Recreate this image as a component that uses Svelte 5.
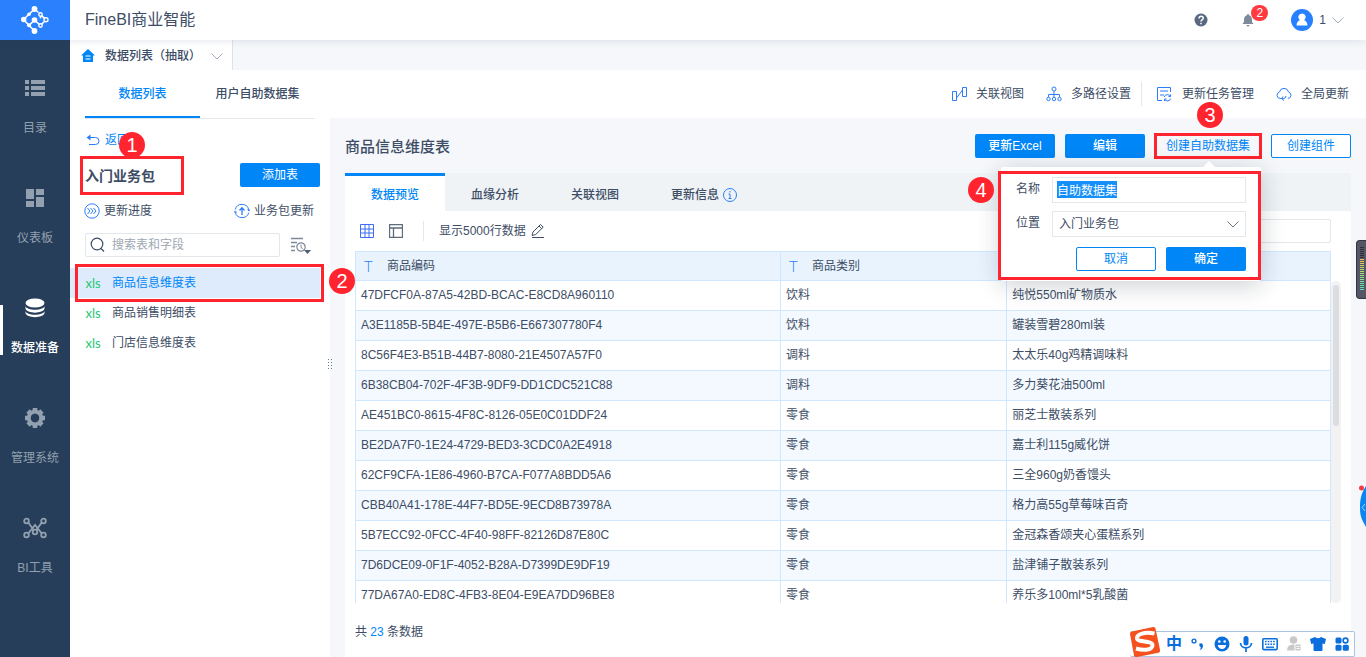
<script lang="ts">
  import { onMount } from "svelte";

  interface DataRow {
    code: string;
    category: string;
    name: string;
  }

  const navItems = [
    { icon: "list", label: "目录" },
    { icon: "board", label: "仪表板" },
    { icon: "data", label: "数据准备" },
    { icon: "gear", label: "管理系统" },
    { icon: "tools", label: "BI工具" },
  ];

  const tables = ["商品信息维度表", "商品销售明细表", "门店信息维度表"];

  const detailTabs = ["数据预览", "血缘分析", "关联视图", "更新信息"];

  const rows: DataRow[] = [
    { code: "47DFCF0A-87A5-42BD-BCAC-E8CD8A960110", category: "饮料", name: "纯悦550ml矿物质水" },
    { code: "A3E1185B-5B4E-497E-B5B6-E667307780F4", category: "饮料", name: "罐装雪碧280ml装" },
    { code: "8C56F4E3-B51B-44B7-8080-21E4507A57F0", category: "调料", name: "太太乐40g鸡精调味料" },
    { code: "6B38CB04-702F-4F3B-9DF9-DD1CDC521C88", category: "调料", name: "多力葵花油500ml" },
    { code: "AE451BC0-8615-4F8C-8126-05E0C01DDF24", category: "零食", name: "丽芝士散装系列" },
    { code: "BE2DA7F0-1E24-4729-BED3-3CDC0A2E4918", category: "零食", name: "嘉士利115g威化饼" },
    { code: "62CF9CFA-1E86-4960-B7CA-F077A8BDD5A6", category: "零食", name: "三全960g奶香馒头" },
    { code: "CBB40A41-178E-44F7-BD5E-9ECD8B73978A", category: "零食", name: "格力高55g草莓味百奇" },
    { code: "5B7ECC92-0FCC-4F40-98FF-82126D87E80C", category: "零食", name: "金冠森香颂夹心蛋糕系列" },
    { code: "7D6DCE09-0F1F-4052-B28A-D7399DE9DF19", category: "零食", name: "盐津铺子散装系列" },
    { code: "77DA67A0-ED8C-4FB3-8E04-E9EA7DD96BE8", category: "零食", name: "养乐多100ml*5乳酸菌" },
  ];

  let activeNav = $state("data");
  let activeTable = $state(tables[0]);
  let activeTab = $state(detailTabs[0]);
  let keyword = $state("");
  let previewKeyword = $state("");
  let datasetName = $state("自助数据集");
  let location = $state("入门业务包");
  let nameInput: HTMLInputElement;

  onMount(() => {
    nameInput.focus();
    nameInput.select();
  });
</script>

{#snippet chevron()}
  <svg class="chevron" width="12" height="7" viewBox="0 0 12 7" aria-hidden="true">
    <path d="M.5.5 6 6 11.5.5" fill="none" stroke="currentColor" />
  </svg>
{/snippet}

{#snippet navIcon(name: string)}
  <svg width="24" height="22" viewBox="0 0 24 22" fill="currentColor" aria-hidden="true">
    {#if name === "list"}
      <path d="M2 3h4v4H2zM8 3h14v4H8zM2 9h4v4H2zM8 9h14v4H8zM2 15h4v4H2zM8 15h14v4H8z" />
    {:else if name === "board"}
      <path d="M3 2h8v10H3zM13 2h8v6h-8zM3 14h8v6H3zM13 10h8v10h-8z" />
    {:else if name === "data"}
      <ellipse cx="12" cy="6" rx="9.5" ry="4.6" />
      <path d="M2.500 9c1 5 18 5 19 0v2.500c-1 5.500-18 5.500-19 0zM2.500 14c1 5 18 5 19 0v2c-1 5.500-18 5.500-19 0z" />
    {:else if name === "gear"}
      <circle cx="12" cy="11" r="6.200" fill="none" stroke="currentColor" stroke-width="4" />
      <path
        d="M12 1v4M12 17v4M2 11h4M18 11h4M5 4l3 3M16 15l3 3M19 4l-3 3M8 15l-3 3"
        stroke="currentColor"
        stroke-width="4.600"
      />
      <circle cx="12" cy="11" r="4.200" fill="#263e5a" />
    {:else}
      <g fill="none" stroke="currentColor" stroke-width="1.800">
        <circle cx="3.500" cy="4" r="2.300" />
        <circle cx="20.500" cy="4" r="2.300" />
        <circle cx="3.500" cy="18" r="2.300" />
        <circle cx="20.500" cy="18" r="2.300" />
        <circle cx="12" cy="15" r="2.300" />
        <path d="m5.200 5.500 5.300 7.300M18.800 5.500l-5.300 7.300M5.200 16.500 12 8l6.800 8.500" />
      </g>
    {/if}
  </svg>
{/snippet}

{#snippet actionIcon(name: string)}
  <svg width="16" height="16" viewBox="0 0 16 16" fill="none" stroke="#2c7dfa" aria-hidden="true">
    {#if name === "relation"}
      <path d="M1.500 5.500h4v9h-4zM11.500 1.500h4v9h-4zM5.500 12l6-8" />
    {:else if name === "path"}
      <circle cx="8" cy="3" r="2" />
      <circle cx="2.500" cy="13" r="1.700" />
      <circle cx="8" cy="13" r="1.700" />
      <circle cx="13.500" cy="13" r="1.700" />
      <path d="M8 5v6M2.500 11V8.500h11V11" />
    {:else if name === "task"}
      <path d="M14.500 6V1.500h-13v13H6M4 5h8M4 9h4" />
      <path d="M8.200 11a3.500 3.500 0 0 1 6.300-.7M14.800 12.500a3.500 3.500 0 0 1-6.300.8M14.500 8.500v2h-2M8.500 15v-2h2" />
    {:else}
      <path d="M5.500 12.500H4.200a3.300 3.300 0 0 1-.7-6.500 4.600 4.600 0 0 1 9 0 3.300 3.300 0 0 1-.7 6.500M7 10.500l-1.500 2L8 14.500M5.500 12.500h2.200q2 0 2.300-2.500" />
    {/if}
  </svg>
{/snippet}

{#snippet step(number: number)}
  <span class="step step--{number}">{number}</span>
{/snippet}

<div class="app">
  <header class="topbar">
    <a class="topbar__logo" href="#home" aria-label="首页">
      <svg width="30" height="30" viewBox="0 0 30 30" fill="none" stroke="#fff" stroke-width="1.600" aria-hidden="true">
        <path d="M14.500 4 3.500 14.500l11 11.500M14.500 15 9 20.500M14.500 15l6 5.500 5.500-5.700-5.500-5.300v4M14.500 4l4 3.500" />
        <g fill="#fff" stroke="none">
          <circle cx="14.500" cy="4" r="2.900" />
          <circle cx="9" cy="9.300" r="1.800" />
          <circle cx="3.700" cy="14.500" r="2.700" />
          <circle cx="14.500" cy="15" r="2.800" />
          <circle cx="9" cy="20.300" r="2" />
          <circle cx="14.500" cy="26" r="2.900" />
        </g>
        <g fill="#2b80fd" stroke-width="1.400">
          <circle cx="20.500" cy="9.500" r="1.700" />
          <circle cx="26" cy="14.800" r="2" />
          <circle cx="20.500" cy="20.500" r="1.700" />
        </g>
      </svg>
    </a>
    <h1 class="topbar__title">FineBI商业智能</h1>
    <div class="topbar__tools">
      <button class="plain" aria-label="帮助">
        <svg width="14" height="14" viewBox="0 0 14 14" aria-hidden="true">
          <circle cx="7" cy="7" r="6.500" fill="#57687f" />
          <path d="M5 5.500c0-3 4.200-2.700 4.200-.2C9.200 6.900 7 6.800 7 8.600M7 9.800v1.500" fill="none" stroke="#fff" stroke-width="1.500" />
        </svg>
      </button>
      <button class="plain bell" aria-label="消息">
        <svg width="12" height="14" viewBox="0 0 12 14" fill="#7c8a9c" aria-hidden="true">
          <path d="M6 1q1 0 1 1.200Q10 3 10 7v2l1.500 2H.5L2 9V7q0-4 3-4.800Q5 1 6 1zM4.500 12h3q-.2 1.500-1.500 1.500T4.500 12z" />
        </svg>
        <span class="bell__count">2</span>
      </button>
      <button class="plain user">
        <svg width="22" height="22" viewBox="0 0 22 22" aria-hidden="true">
          <circle cx="11" cy="11" r="11" fill="#2680ff" />
          <path d="M11 4.500a3.700 3.700 0 0 1 2.200 6.700q3 1 3.300 5.300h-11q.3-4.300 3.300-5.300A3.700 3.700 0 0 1 11 4.500z" fill="#fff" />
        </svg>
        <span>1</span>
        {@render chevron()}
      </button>
    </div>
  </header>

  <div class="workspace">
    <nav class="nav">
      {#each navItems as item (item.icon)}
        <button
          class="nav__item"
          class:nav__item--active={activeNav === item.icon}
          onclick={() => (activeNav = item.icon)}
        >
          {@render navIcon(item.icon)}
          <span>{item.label}</span>
        </button>
      {/each}
    </nav>

    <div class="page">
      <div class="page-tabs">
        <button class="page-tabs__tab">
          <svg width="14" height="14" viewBox="0 0 14 14" aria-hidden="true">
            <path d="M7 0 0 6.500h2V13h10V6.500h2z" fill="#0086f6" />
            <path d="M4.500 7h5M4.500 10h5" stroke="#fff" />
          </svg>
          <span>数据列表（抽取）</span>
          {@render chevron()}
        </button>
      </div>

      <main class="main">
        <aside class="package">
          <div class="package__tabs">
            <button class="package__tab package__tab--active">数据列表</button>
            <button class="package__tab">用户自助数据集</button>
          </div>

          <a class="package__back" href="#packages">
            <svg width="14" height="12" viewBox="0 0 14 12" fill="none" stroke="#2c7dfa" aria-hidden="true">
              <path d="M2 3.500h7.500a3.500 3.500 0 0 1 0 7H3" />
              <path d="M.5 3.500 4.500.5v6z" fill="#2c7dfa" stroke="none" />
            </svg>
            <span>返回</span>
          </a>

          <div class="package__head">
            <h2 class="package__name">入门业务包{@render step(1)}</h2>
            <button class="btn btn--primary btn--light">添加表</button>
          </div>

          <div class="package__links">
            <button class="plain">
              <svg width="16" height="16" viewBox="0 0 16 16" fill="none" stroke="#2c7dfa" aria-hidden="true">
                <circle cx="8" cy="8" r="7.200" />
                <path d="m3.500 5 2.500 3-2.500 3M6.500 5 9 8l-2.500 3M9.500 5 12 8l-2.500 3" />
              </svg>
              <span>更新进度</span>
            </button>
            <button class="plain">
              <svg width="16" height="16" viewBox="0 0 16 16" fill="none" stroke="#2c7dfa" aria-hidden="true">
                <path d="M1.200 6.500A7 7 0 0 1 14.800 7M14.800 9.500A7 7 0 0 1 1.200 9M0 9.500l1.200-1.500 1.600 1.400M13.500 6.500 15 8l1-1.600" />
                <path d="M8 12V5M5.500 7.500 8 4.800l2.500 2.700" stroke-width="1.300" />
              </svg>
              <span>业务包更新</span>
            </button>
          </div>

          <div class="package__filter">
            <label class="search">
              <svg width="16" height="16" viewBox="0 0 16 16" fill="none" stroke="#3d4d66" stroke-width="1.200" aria-hidden="true">
                <circle cx="7" cy="7" r="5.800" />
                <path d="m11 11.500 3 3" />
              </svg>
              <input type="text" placeholder="搜索表和字段" aria-label="搜索表和字段" bind:value={keyword} />
            </label>
            <button class="plain" aria-label="排序">
              <svg width="22" height="18" viewBox="0 0 22 18" fill="none" stroke="#7c8a99" aria-hidden="true">
                <path d="M1 2.500h12M1 6.500h6M1 10.500h4M1 14.500h4" stroke-width="1.600" />
                <circle cx="11" cy="11" r="4.200" stroke-width="1.200" />
                <path d="M11 8.500V11l1.500 2" />
                <path d="M14 14h7l-3.500 4z" fill="#4f5f75" stroke="none" />
              </svg>
            </button>
          </div>

          <ul class="table-list">
            {#each tables as table (table)}
              <li>
                <button
                  class="table-list__item"
                  class:table-list__item--active={activeTable === table}
                  onclick={() => (activeTable = table)}
                >
                  <span class="table-list__type">xls</span>
                  <span>{table}</span>
                </button>
              </li>
            {/each}
            <li>{@render step(2)}</li>
          </ul>
          <span class="splitter" aria-hidden="true"></span>
        </aside>

        <section class="detail">
          <div class="actions">
            <button class="plain">{@render actionIcon("relation")}<span>关联视图</span></button>
            <button class="plain">{@render actionIcon("path")}<span>多路径设置</span></button>
            <button class="plain actions__divided">{@render actionIcon("task")}<span>更新任务管理</span></button>
            <button class="plain">{@render actionIcon("cloud")}<span>全局更新</span></button>
          </div>

          <div class="detail__body">
            <div class="detail__head">
              <h2 class="detail__title">商品信息维度表</h2>
              <button class="btn btn--primary">更新Excel</button>
              <button class="btn btn--primary">编辑</button>
              <div class="create">
                <button class="btn create__trigger">创建自助数据集</button>
                {@render step(3)}
                <form class="popover" onsubmit={(event) => event.preventDefault()}>
                  {@render step(4)}
                  <div class="popover__row">
                    <label for="dataset-name">名称</label>
                    <input
                      id="dataset-name"
                      class="popover__control"
                      type="text"
                      autocomplete="off"
                      spellcheck="false"
                      bind:value={datasetName}
                      bind:this={nameInput}
                    />
                  </div>
                  <div class="popover__row">
                    <label for="dataset-location">位置</label>
                    <div class="popover__select">
                      <select id="dataset-location" class="popover__control" bind:value={location}>
                        <option value="入门业务包">入门业务包</option>
                      </select>
                      {@render chevron()}
                    </div>
                  </div>
                  <div class="popover__buttons">
                    <button class="btn btn--outline" type="button">取消</button>
                    <button class="btn btn--primary" type="submit">确定</button>
                  </div>
                </form>
              </div>
              <button class="btn btn--outline">创建组件</button>
            </div>

            <div class="card">
              <div class="card__tabs">
                {#each detailTabs as tab (tab)}
                  <button
                    class="card__tab"
                    class:card__tab--active={activeTab === tab}
                    onclick={() => (activeTab = tab)}
                  >
                    {tab}
                    {#if tab === "更新信息"}
                      <svg width="14" height="14" viewBox="0 0 14 14" fill="none" stroke="#2c7dfa" aria-hidden="true">
                        <circle cx="7" cy="7" r="6.500" />
                        <path d="M7 3v1.500M5.500 6H7v4.500M5.500 10.500h3" />
                      </svg>
                    {/if}
                  </button>
                {/each}
              </div>

              <div class="toolbar">
                <button class="plain" aria-label="数据视图">
                  <svg width="14" height="14" viewBox="0 0 14 14" fill="none" stroke="#3d6cf5" aria-hidden="true">
                    <path d="M.5.5h13v13H.5zM.5 5h13M.5 9h13M5 .5v13M9 .5v13" />
                  </svg>
                </button>
                <button class="plain" aria-label="字段视图">
                  <svg width="14" height="14" viewBox="0 0 14 14" fill="none" stroke="#5f6b7a" aria-hidden="true">
                    <path d="M.5.500h13v13H.5zM.5 4h13M4.500 4v9.500" stroke-width="1.300" />
                  </svg>
                </button>
                <button class="plain toolbar__limit">
                  <span>显示5000行数据</span>
                  <svg width="14" height="14" viewBox="0 0 14 14" fill="none" stroke="#3d4d66" aria-hidden="true">
                    <path d="M1 11.500 2 8l7.500-7.500 2.700 2.700L4.700 10.500zM8 2l2.700 2.700M1 13.500h12" />
                  </svg>
                </button>
                <input class="toolbar__search" type="text" aria-label="搜索字段" bind:value={previewKeyword} />
              </div>

              <div class="preview">
                <table class="grid">
                  <thead>
                    <tr>
                      <th><span class="grid__type">T</span>商品编码</th>
                      <th><span class="grid__type">T</span>商品类别</th>
                      <th><span class="grid__type">T</span>商品名称</th>
                    </tr>
                  </thead>
                  <tbody>
                    {#each rows as row (row.code)}
                      <tr>
                        <td>{row.code}</td>
                        <td>{row.category}</td>
                        <td>{row.name}</td>
                      </tr>
                    {/each}
                  </tbody>
                </table>
                <div class="scroll" aria-hidden="true"><span class="scroll__thumb"></span></div>
              </div>

              <p class="card__total">共 <b>23</b> 条数据</p>
            </div>
          </div>
        </section>
      </main>
    </div>
  </div>

  <span class="meter" aria-hidden="true"></span>
  <svg class="bubble" width="8" height="48" viewBox="0 0 8 48" aria-hidden="true">
    <path d="M8 3C3 11 2 16 2 25s2 12 6 19z" fill="#0a86f2" />
    <path d="m7 21-3 3.500L7 28" fill="none" stroke="#a9d6ff" />
    <circle cx="3.500" cy="5" r="2.500" fill="#f33b43" />
  </svg>

  <div class="ime">
    <svg class="ime__logo" width="32" height="32" viewBox="0 0 32 32" aria-hidden="true">
      <path d="M3 5.500 24 1q2-.4 2.500 1.500L31 24q.4 2-1.500 2.800L8 31q-2.500.4-3-1.500L1 8q-.2-2 2-2.500z" fill="#f4511e" />
      <path d="M25.500 7.500C16 5.500 7.500 8 8 12.500c.5 4 15.500 2 15.500 6.500 0 5-8 6-16.500 3.500" fill="none" stroke="#fff" stroke-width="4" />
    </svg>
    <span class="ime__lang">中</span>
    <svg width="16" height="16" viewBox="0 0 16 16" aria-hidden="true">
      <circle cx="4" cy="5" r="1.900" fill="none" stroke="#0a6fdc" stroke-width="1.400" />
      <path d="M9.500 7.500q3.500-1 3.500 2.200 0 3.300-3.500 4.300 1.800-2 1.200-3-2-.7-1.200-3.500z" fill="#0a6fdc" />
    </svg>
    <svg width="16" height="16" viewBox="0 0 16 16" aria-hidden="true">
      <circle cx="8" cy="8" r="7.500" fill="#0a6fdc" />
      <path d="M3.800 9h8.400Q11.500 13 8 13T3.800 9z" fill="#fff" />
      <circle cx="5.300" cy="5.500" r="1.300" fill="#fff" />
      <circle cx="10.700" cy="5.500" r="1.300" fill="#fff" />
    </svg>
    <svg width="16" height="16" viewBox="0 0 16 16" fill="none" stroke="#0a6fdc" aria-hidden="true">
      <rect x="5.500" y="0" width="5" height="9.500" rx="2.500" fill="#0a6fdc" stroke="none" />
      <path d="M2.500 7c0 6.500 11 6.500 11 0M8 12v4" stroke-width="1.700" />
    </svg>
    <svg width="16" height="16" viewBox="0 0 16 16" aria-hidden="true">
      <rect x=".8" y="2.800" width="14.400" height="10.800" rx="1" fill="#fff" stroke="#0a6fdc" stroke-width="1.600" />
      <path d="M3 5.500h10M3 8.200h10" stroke="#0a6fdc" stroke-width="1.600" stroke-dasharray="1.600 1.100" />
      <path d="M4 11.200h8" stroke="#0a6fdc" stroke-width="1.400" />
    </svg>
    <svg width="16" height="16" viewBox="0 0 16 16" fill="#c9c9c9" aria-hidden="true">
      <circle cx="7.500" cy="4" r="3.800" />
      <path d="M1 14.500Q1 8.500 7 8.500h2v6z" />
      <path d="M9 8h6v7H9z" stroke="#fff" />
      <path d="M10.500 10.500h3M10.500 12.500h3" stroke="#fff" />
    </svg>
    <svg width="16" height="16" viewBox="0 0 16 16" fill="#0a6fdc" aria-hidden="true">
      <path d="M5 1q3 2.500 6 0l5 2-1.200 5L12.500 7.500V14q0 1-1 1h-7q-1 0-1-1V7.500L1.200 8 0 3z" />
    </svg>
    <svg width="16" height="16" viewBox="0 0 16 16" fill="#0a6fdc" aria-hidden="true">
      <rect x="1.500" y="1.500" width="6" height="6" rx="1.500" />
      <circle cx="11.500" cy="4.500" r="2.400" fill="none" stroke="#0a6fdc" stroke-width="1.600" />
      <rect x="1.500" y="8.800" width="6" height="6" rx="1.500" />
      <rect x="8.800" y="8.800" width="6" height="6" rx="1.500" />
    </svg>
  </div>
</div>

<style>
  :global(body) {
    margin: 0;
    overflow: hidden;
  }

  .app {
    --ink: #3d4d66;
    --blue: #0086f6;
    --red: #ff242d;
    --line: #e3e6ea;
    display: flex;
    flex-direction: column;
    position: relative;
    height: 100vh;
    overflow: hidden;
    background: #fff;
    color: var(--ink);
    font-family: "Liberation Sans", "Noto Sans CJK SC", sans-serif;
    font-size: 12px;
    line-height: 16px;
  }

  .app * {
    box-sizing: border-box;
  }

  button,
  input,
  select {
    margin: 0;
    padding: 0;
    border: 0;
    border-radius: 0;
    background: none;
    color: inherit;
    font: inherit;
  }

  button {
    cursor: pointer;
    white-space: nowrap;
  }

  input,
  select {
    min-width: 0;
    outline: none;
  }

  h1,
  h2,
  p,
  ul {
    margin: 0;
    padding: 0;
  }

  svg {
    flex: none;
  }

  .plain {
    display: inline-flex;
    align-items: center;
  }

  .chevron {
    color: #a3afbd;
  }

  .btn {
    flex: none;
    width: 80px;
    height: 24px;
    border-radius: 2px;
    text-align: center;
  }

  .btn--primary {
    background: var(--blue);
    color: #fff;
    font-weight: 500;
  }

  .btn--light {
    font-weight: 400;
  }

  .btn--outline {
    border: 1px solid var(--blue);
    background: #fff;
    color: var(--blue);
  }

  /* numbered guide marks */
  .step {
    position: absolute;
    z-index: 5;
    width: 26px;
    height: 26px;
    border-radius: 50%;
    background: var(--red);
    color: #fff;
    font: 400 20px/26px "Liberation Sans", sans-serif;
    text-align: center;
  }

  .step--1 {
    top: -27px;
    left: 36px;
  }

  .step--2 {
    top: 0;
    right: -25px;
  }

  .step--3 {
    top: -32px;
    left: 42px;
  }

  .step--4 {
    top: 10px;
    left: -33px;
  }

  /* top bar */
  .topbar {
    display: flex;
    align-items: center;
    flex: none;
    z-index: 2;
    height: 40px;
    background: #fff;
    box-shadow: 0 1px 8px rgba(40, 60, 90, 0.12);
  }

  .topbar__logo {
    display: flex;
    align-items: center;
    justify-content: center;
    width: 70px;
    height: 40px;
    background: #2b80fd;
  }

  .topbar__title {
    margin-left: 15px;
    font-size: 16px;
    font-weight: 400;
    line-height: 20px;
  }

  .topbar__tools {
    display: flex;
    align-items: center;
    gap: 34px;
    margin-left: auto;
    padding-right: 22px;
  }

  .bell {
    position: relative;
  }

  .bell__count {
    position: absolute;
    top: -8px;
    left: 9px;
    width: 17px;
    height: 16px;
    border-radius: 8px;
    background: #ff3b41;
    color: #fff;
    text-align: center;
  }

  .user {
    gap: 6px;
    margin-left: 3px;
  }

  /* side navigation */
  .workspace {
    display: flex;
    flex: 1;
    min-height: 0;
  }

  .nav {
    flex: none;
    width: 70px;
    padding-top: 15px;
    background: #263e5a;
  }

  .nav__item {
    display: flex;
    flex-direction: column;
    align-items: center;
    gap: 21px;
    position: relative;
    width: 100%;
    height: 110px;
    padding-top: 22px;
    color: #93a0af;
  }

  .nav__item--active {
    color: #fff;
    font-weight: 500;
  }

  .nav__item--active::before {
    content: "";
    position: absolute;
    top: 30px;
    left: 0;
    width: 3px;
    height: 50px;
    background: #fff;
  }

  .page {
    display: flex;
    flex-direction: column;
    flex: 1;
    min-width: 0;
  }

  .page-tabs {
    flex: none;
    height: 30px;
    background: #f5f7fa;
  }

  .page-tabs__tab {
    display: flex;
    align-items: center;
    gap: 10px;
    height: 30px;
    padding: 2px 9px 0 11px;
    border-right: 1px solid #dfe3e8;
    background: #fff;
    font-weight: 500;
  }

  .main {
    display: flex;
    flex: 1;
    min-height: 0;
  }

  /* package panel */
  .package {
    flex: none;
    position: relative;
    width: 260px;
  }

  .package__tabs {
    display: flex;
    height: 49px;
    margin: 0 15px;
    border-bottom: 1px solid var(--line);
  }

  .package__tab {
    flex: 1;
    height: 48px;
    padding-top: 2px;
    border-bottom: 2px solid transparent;
    font-weight: 500;
  }

  .package__tab--active {
    border-bottom-color: var(--blue);
    color: var(--blue);
  }

  .package__back {
    display: flex;
    align-items: center;
    gap: 5px;
    height: 42px;
    padding-left: 16px;
    color: var(--blue);
    text-decoration: none;
  }

  .package__head {
    display: flex;
    align-items: center;
    justify-content: space-between;
    height: 28px;
    padding: 0 10px;
  }

  .package__name {
    position: relative;
    padding: 8px 26px 7px 2px;
    border: 3px solid var(--red);
    font-size: 14px;
    font-weight: 700;
    line-height: 18px;
  }

  .package__links {
    display: flex;
    align-items: center;
    justify-content: space-between;
    height: 44px;
    padding: 0 16px 0 14px;
  }

  .package__links .plain {
    gap: 4px;
  }

  .package__filter {
    display: flex;
    align-items: center;
    gap: 10px;
    padding: 0 18px 11px 15px;
  }

  .search {
    display: flex;
    align-items: center;
    flex: 1;
    gap: 6px;
    min-width: 0;
    height: 24px;
    padding-left: 4px;
    border: 1px solid var(--line);
    border-radius: 2px;
  }

  .search input {
    flex: 1;
  }

  .search input::placeholder {
    color: #9ea7b3;
  }

  .table-list {
    position: relative;
    list-style: none;
  }

  .table-list__item {
    display: flex;
    align-items: center;
    gap: 11px;
    width: 250px;
    height: 30px;
    padding-left: 15px;
  }

  .table-list__item--active {
    position: relative;
    background: #deebfd;
    color: var(--blue);
  }

  .table-list__item--active::after {
    content: "";
    position: absolute;
    inset: -4px -4px -4px 5px;
    border: 3px solid var(--red);
  }

  .table-list__type {
    width: 16px;
    color: #1ec773;
    font-family: Lato, sans-serif;
    font-size: 13px;
  }

  .splitter {
    position: absolute;
    top: 288px;
    right: -3px;
    width: 6px;
    height: 13px;
    background: radial-gradient(circle, #6d7b8e 1px, transparent 1px) 0 0 / 3px 3px;
  }

  /* detail */
  .detail {
    display: flex;
    flex-direction: column;
    flex: 1;
    min-width: 0;
  }

  .actions {
    display: flex;
    align-items: center;
    justify-content: flex-end;
    flex: none;
    gap: 22px;
    height: 48px;
    padding-right: 17px;
  }

  .actions .plain {
    gap: 9px;
  }

  .actions .actions__divided {
    gap: 10px;
    height: 24px;
    margin-left: -12px;
    padding-left: 14px;
    border-left: 1px solid var(--line);
  }

  .detail__body {
    display: flex;
    flex-direction: column;
    flex: 1;
    min-height: 0;
    padding: 0 15px;
    background: #f5f7fa;
  }

  .detail__head {
    display: flex;
    align-items: center;
    flex: none;
    gap: 10px;
    height: 55px;
  }

  .detail__title {
    margin-right: auto;
    padding-top: 2px;
    font-size: 15px;
    font-weight: 500;
    line-height: 20px;
  }

  .create {
    position: relative;
    z-index: 3;
  }

  .create__trigger {
    width: 106px;
    border-radius: 0;
    outline: 3px solid var(--red);
    outline-offset: -2px;
    color: var(--blue);
  }

  .popover {
    display: flex;
    flex-direction: column;
    gap: 8px;
    position: absolute;
    top: 33px;
    right: 0;
    width: 260px;
    padding: 10px 15px;
    border-radius: 2px;
    background: #fff;
    box-shadow: 0 4px 24px rgba(20, 30, 50, 0.22);
  }

  .popover::before {
    content: "";
    position: absolute;
    top: -6px;
    right: 46px;
    border: 6px solid transparent;
    border-top: 0;
    border-bottom-color: #fff;
  }

  .popover::after {
    content: "";
    position: absolute;
    inset: 4px 0 1px -3px;
    border: 3px solid var(--red);
    pointer-events: none;
  }

  .popover__row {
    display: flex;
    gap: 12px;
  }

  .popover__row label {
    flex: none;
    width: 24px;
    line-height: 24px;
  }

  .popover__control {
    flex: 1;
    width: 100%;
    height: 26px;
    padding: 0 5px;
    border: 1px solid var(--line);
  }

  .popover__control::selection {
    background: #1590fb;
    color: #fff;
  }

  .popover__row input {
    padding: 0 4px;
  }

  .popover__select {
    display: flex;
    flex: 1;
    position: relative;
  }

  .popover__select select {
    appearance: none;
    padding-left: 6px;
  }

  .popover__select .chevron {
    position: absolute;
    top: 10px;
    right: 7px;
    color: #65758a;
    pointer-events: none;
  }

  .popover__buttons {
    display: flex;
    justify-content: flex-end;
    gap: 10px;
    padding-top: 2px;
  }

  .card {
    display: flex;
    flex-direction: column;
    flex: 1;
    min-height: 0;
    background: #fff;
  }

  .card__tabs {
    display: flex;
    flex: none;
    height: 38px;
    background: #eff3f6;
  }

  .card__tab {
    display: flex;
    align-items: center;
    justify-content: center;
    gap: 4px;
    min-width: 100px;
    padding: 6px 26px 0;
    font-weight: 500;
  }

  .card__tab--active {
    padding-top: 3px;
    border-top: 3px solid var(--blue);
    background: #fff;
    color: var(--blue);
  }

  .toolbar {
    display: flex;
    align-items: center;
    flex: none;
    gap: 15px;
    height: 40px;
    padding: 0 20px 0 15px;
  }

  .toolbar__limit {
    gap: 5px;
    height: 20px;
    margin-left: 5px;
    padding-left: 15px;
    border-left: 1px solid var(--line);
  }

  .toolbar__search {
    width: 200px;
    height: 24px;
    margin-left: auto;
    border: 1px solid var(--line);
    border-radius: 2px;
  }

  .preview {
    display: flex;
    align-items: flex-start;
    flex: 1;
    min-height: 0;
    margin: 0 10px;
    overflow: hidden;
  }

  .grid {
    flex: 1;
    border-collapse: collapse;
    table-layout: fixed;
    width: 100%;
  }

  .grid th,
  .grid td {
    height: 30px;
    padding: 0 5px 2px;
    border: 1px solid #d0e8ff;
    text-align: left;
    white-space: nowrap;
  }

  .grid th {
    height: 29px;
    padding: 0 8px;
    background: #e8f3fe;
    font-weight: 400;
  }

  .grid th:first-child {
    width: 43.6%;
  }

  .grid th:nth-child(2) {
    width: 23.2%;
  }

  .grid tbody tr:nth-child(even) {
    background: #f3f9fe;
  }

  .grid__type {
    display: inline-block;
    width: 23px;
    color: #2c7dfa;
    font-family: Lato, sans-serif;
    font-size: 15px;
    font-weight: 300;
    vertical-align: middle;
  }

  .scroll {
    align-self: stretch;
    flex: none;
    width: 10px;
    margin-top: 30px;
    padding: 4px 2px;
    border-radius: 5px;
    background: #f2f2f3;
  }

  .scroll__thumb {
    display: block;
    height: 45%;
    border-radius: 3px;
    background: #dcdde1;
  }

  .card__total {
    flex: none;
    height: 54px;
    padding: 21px 10px 0;
  }

  .card__total b {
    color: var(--blue);
    font-weight: 400;
  }

  /* desktop overlays */
  .meter {
    position: absolute;
    top: 240px;
    right: 0;
    z-index: 4;
    width: 10px;
    height: 59px;
    border: 1px solid #35363f;
    border-right: 0;
    border-radius: 4px 0 0 4px;
    background: #555767;
  }

  .meter::before {
    content: "";
    position: absolute;
    inset: 6px 2px 7px 3px;
    background:
      repeating-linear-gradient(transparent 0 1px, #555767 1px 2px),
      linear-gradient(#2c2e38 0 12px, #f5c04d 12px, #a8e07a 60%, #52dfc4);
  }

  .bubble {
    position: absolute;
    top: 483px;
    right: 0;
    z-index: 4;
  }

  .ime {
    display: flex;
    align-items: center;
    gap: 8px;
    position: absolute;
    right: 11px;
    bottom: 0;
    z-index: 4;
    height: 26px;
    padding: 0 4px 0 36px;
    border: 1px solid #a9c4e4;
    border-left: 0;
    border-radius: 2px;
    background: linear-gradient(#fff, #fff) 16px 0 no-repeat;
  }

  .ime__logo {
    position: absolute;
    bottom: -2px;
    left: -1px;
  }

  .ime__lang {
    width: 16px;
    color: #0a6fdc;
    font-size: 16px;
    font-weight: 700;
  }
</style>
